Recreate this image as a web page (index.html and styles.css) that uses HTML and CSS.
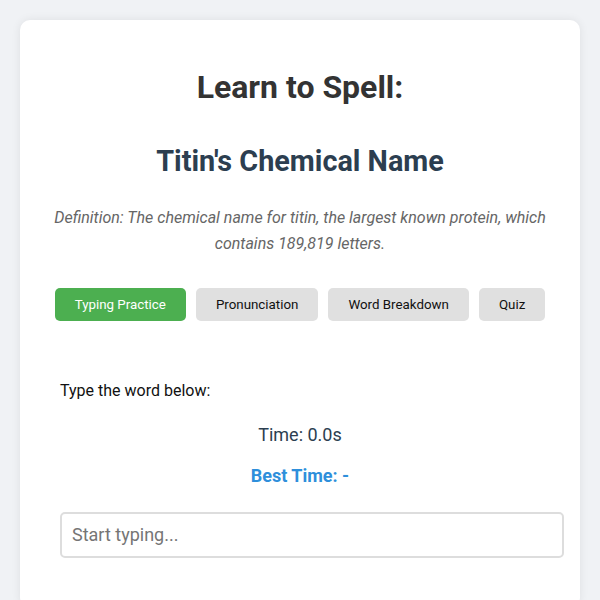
FILE: index.html
```html
<!DOCTYPE html>
<html lang="en">
<head>
  <meta charset="UTF-8" />
  <meta name="viewport" content="width=device-width, initial-scale=1" />
  <title>Learn to Spell: Titin's Chemical Name</title>
  <link rel="stylesheet" href="styles.css">
</head>
<body>
  <div class="container">
    <h1>Learn to Spell:</h1>
    <h2 class="palavra">Titin's Chemical Name</h2>
    <p class="definicao">Definition: The chemical name for titin, the largest known protein, which contains 189,819 letters.</p>

    <div class="abas">
      <button class="aba ativa">Typing Practice</button>
      <button class="aba">Pronunciation</button>
      <button class="aba">Word Breakdown</button>
      <button class="aba">Quiz</button>
    </div>

    <div class="secao">
      <p class="instrucao">Type the word below:</p>
      <div class="tempo">Time: <span id="tempo">0.0</span>s</div>
      <div class="melhor">Best Time: <span id="melhor">-</span></div>
      <input type="text" id="digitar" placeholder="Start typing...">
    </div>
  </div>
</body>
</html>
```

FILE: styles.css
```css
body {
  font-family: Roboto, "Liberation Sans", Arial, sans-serif;
  background: #f0f2f5;
  margin: 0;
  padding: 20px;
}
.container {
  max-width: 500px;
  margin: 0 auto;
  background: #fff;
  padding: 30px 30px 40px;
  border-radius: 10px;
  box-shadow: 0 0 10px rgba(0,0,0,0.08);
}
h1 {
  text-align: center;
  color: #333;
  font-size: 32px;
  margin: 18px 0 0;
}
.palavra {
  text-align: center;
  color: #2c3e50;
  font-size: 28.8px;
  margin: 38px 0 0;
}
.definicao {
  text-align: center;
  font-style: italic;
  color: #666;
  font-size: 16px;
  line-height: 26px;
  margin: 27px 0 0;
}
.abas {
  display: flex;
  justify-content: center;
  gap: 10px;
  margin-top: 31px;
}
.aba {
  font-family: inherit;
  font-size: 13.33px;
  padding: 9px 20px;
  border: none;
  border-radius: 5px;
  background: #e0e0e0;
  color: #111;
  white-space: nowrap;
  cursor: pointer;
}
.aba.ativa {
  background: #4caf50;
  color: #fff;
}
.secao {
  padding: 10px;
  margin-top: 50px;
}
.instrucao {
  font-size: 16px;
  color: #111;
  margin: 0;
}
.tempo {
  text-align: center;
  font-size: 18px;
  color: #2c3e50;
  margin-top: 24px;
}
.melhor {
  text-align: center;
  font-size: 18px;
  font-weight: bold;
  color: #2e8fdb;
  margin-top: 20px;
}
input {
  width: 100%;
  font-family: inherit;
  font-size: 18px;
  padding: 10px 10px 11px;
  border: 2px solid #ddd;
  border-radius: 5px;
  margin-top: 26px;
}
```
